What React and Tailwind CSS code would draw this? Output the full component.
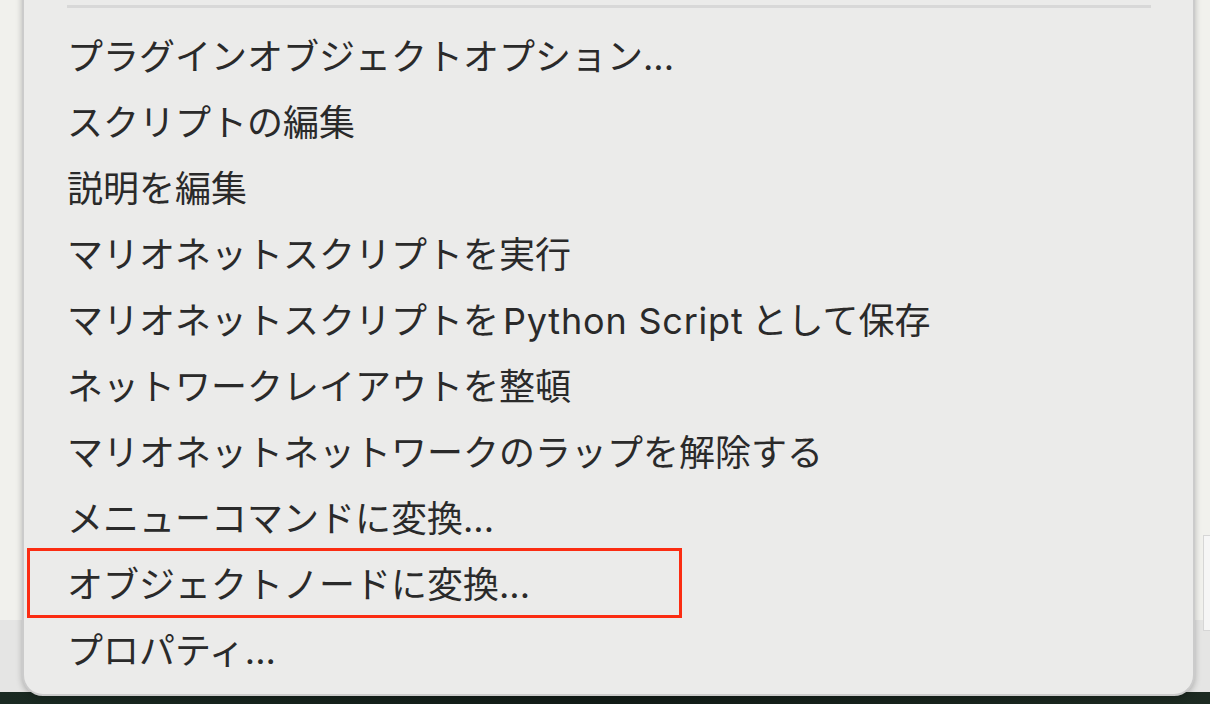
import React from "react";

const items = [
  "プラグインオブジェクトオプション...",
  "スクリプトの編集",
  "説明を編集",
  "マリオネットスクリプトを実行",
  "PY",
  "ネットワークレイアウトを整頓",
  "マリオネットネットワークのラップを解除する",
  "メニューコマンドに変換...",
  "オブジェクトノードに変換...",
  "プロパティ...",
];

export default function App() {
  return (
    <div
      className="relative w-[1210px] h-[704px] overflow-hidden flex flex-col"
      style={{ fontFamily: "Inter, 'Noto Sans CJK JP', sans-serif" }}
    >
      {/* underlying window background */}
      <div className="h-[620px] bg-[#f1f1ed]" />
      <div className="h-[72px] bg-[#e5e5e4]" />
      <div className="flex-1 bg-gradient-to-r from-[#1a2a22] via-[#121c17] to-[#1d2b22]" />

      {/* small panel peeking on the right */}
      <div className="absolute left-[1203px] top-[535px] w-[12px] h-[96px] bg-[#f6f6f6] border border-[#d6d6d6]" />

      {/* context menu */}
      <div className="absolute left-[22px] top-[-20px] w-[1173px] h-[716px] rounded-b-[21px] bg-[#ebebea] border-x-[2px] border-b-[2px] border-[#cbcbcb] shadow-[0_2px_6px_rgba(0,0,0,0.25)] pl-[43px] pr-[42px] pt-[25px]">
        <div className="h-[3px] bg-[#d8d8d8]" />
        <div className="mt-[16px] flex flex-col">
          {items.map((t, i) => (
            <div
              key={i}
              className="h-[66px] flex items-center text-[36px] leading-none text-[#2a2a2a] whitespace-nowrap"
            >
              {t === "PY" ? (
                <span>
                  マリオネットスクリプトを
                  <span className="pl-[4px] pr-[8px] tracking-[0.8px]">Python Script</span>
                  として保存
                </span>
              ) : (
                <span>{t}</span>
              )}
            </div>
          ))}
        </div>
      </div>

      {/* red annotation box */}
      <div className="absolute left-[27px] top-[548px] w-[655px] h-[70px] border-[3px] border-[#fb2c12]" />
    </div>
  );
}
